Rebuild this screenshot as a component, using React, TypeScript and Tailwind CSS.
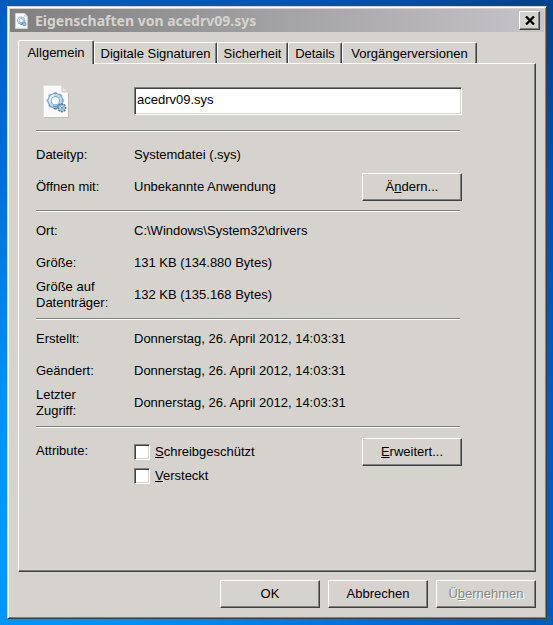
import type { ReactNode } from "react";
import clsx from "clsx";

const tabs = [
  { label: "Allgemein", width: "w-19" },
  { label: "Digitale Signaturen", width: "w-[123px]" },
  { label: "Sicherheit", width: "w-[71px]" },
  { label: "Details", width: "w-[54px]" },
  { label: "Vorgängerversionen", width: "w-[135px]" },
];

const GEAR_TEETH = [0, 45, 90, 135, 180, 225, 270, 315];

const FileIcon = ({ className }: { className: string }) => (
  <svg viewBox="0 0 26 33" className={className} aria-hidden="true">
    <path d="M0.5 0.5H19L25.5 7V32.5H0.5Z" fill="#fbfafa" stroke="#e2dedd" />
    <path d="M19 0.5V7H25.5Z" fill="#e4e2e2" stroke="#c4c0c0" strokeWidth="0.8" />
    <path d="M1 32.5H25.5V8" fill="none" stroke="#b9b4b0" strokeWidth="0.8" />
    <g transform="translate(12.3 15.7)">
      {GEAR_TEETH.map((angle) => (
        <rect
          key={angle}
          x="-1.7"
          y="-8.8"
          width="3.4"
          height="3.4"
          rx="0.8"
          fill={angle > 90 && angle < 225 ? "#54718f" : "#a3bace"}
          transform={`rotate(${angle})`}
        />
      ))}
      <circle r="5.7" fill="none" stroke="#6f93b0" strokeWidth="4" />
      <circle r="5.7" fill="none" stroke="#b4d8ee" strokeWidth="2.6" />
      <path d="M-5.4 1.6A5.7 5.7 0 0 1 -1 -5.6" fill="none" stroke="#e9f6fc" strokeWidth="1.8" />
      <path d="M-2.4 5.2A5.7 5.7 0 0 0 4.8 3" fill="none" stroke="#5fa3da" strokeWidth="1.6" />
    </g>
    <g transform="translate(18.9 22.8)">
      {GEAR_TEETH.map((angle) => (
        <rect
          key={angle}
          x="-0.9"
          y="-4.6"
          width="1.8"
          height="2"
          fill="#54708a"
          transform={`rotate(${angle})`}
        />
      ))}
      <circle r="2.8" fill="#d8edf8" stroke="#4f7391" strokeWidth="1.8" />
      <circle r="2.6" fill="none" stroke="#a6cee8" strokeWidth="1.1" />
      <circle r="0.9" fill="#3f6686" />
    </g>
  </svg>
);

const DialogButton = ({
  children,
  disabled,
}: {
  children: ReactNode;
  disabled?: boolean;
}) => (
  <button
    type="button"
    disabled={disabled}
    className={clsx(
      "h-7 w-25 shrink-0 border border-t-white border-l-white border-r-[#404040] border-b-[#404040] pb-px shadow-[inset_-1px_-1px_0_#808080]",
      disabled && "text-[#868482] [text-shadow:1px_1px_0_#fff]"
    )}
  >
    {children}
  </button>
);

const Separator = () => (
  <hr className="mr-0.5 h-0.5 border-t border-b border-t-[#808080] border-b-white" />
);

const Row = ({
  label,
  value,
  children,
}: {
  label: string;
  value: string;
  children?: ReactNode;
}) => (
  <div className="flex h-8 items-center">
    <dt className="w-[98px] shrink-0 pr-4">{label}</dt>
    <dd className="flex flex-1 items-center justify-between">
      {value}
      {children}
    </dd>
  </div>
);

const Attribute = ({ children }: { children: ReactNode }) => (
  <label className="flex h-6 items-center gap-[5px]">
    <input
      type="checkbox"
      className="size-4 appearance-none border border-t-[#808080] border-l-[#808080] border-r-white border-b-white bg-white shadow-[inset_1px_1px_0_#404040,inset_-1px_-1px_0_#d6d3ce]"
    />
    <span>{children}</span>
  </label>
);

export default function App() {
  return (
    <main className="flex min-h-screen flex-col bg-[radial-gradient(circle_at_0%_88%,#0098ff_0%,#0090f4_20%,#006cd6_50%,#0050ae_85%,#00428c_100%)] py-1.5 pr-1.5 pl-[7px] font-['Liberation_Sans',Arial,sans-serif] text-[13px] leading-4 text-black">
      <div className="flex flex-1 flex-col border border-t-[#d6d3ce] border-l-[#d6d3ce] border-r-[#404040] border-b-[#404040] bg-[#d6d3ce] p-0.5 shadow-[inset_1px_1px_0_#fff,inset_-1px_-1px_0_#808080]">
        <header className="flex h-[23px] items-center bg-linear-to-r from-[#808080] to-[#c6c4c8] pr-1 pl-[5px]">
          <FileIcon className="h-4 w-[13px]" />
          <h1 className="flex-1 pl-[7px] font-['Noto_Sans',sans-serif] text-sm leading-5 font-bold text-[#d6d3ce]">
            Eigenschaften von acedrv09.sys
          </h1>
          <button
            type="button"
            aria-label="Schließen"
            className="flex h-[19px] w-[21px] items-center justify-center border border-t-white border-l-white border-r-[#404040] border-b-[#404040] bg-[#d6d3ce] shadow-[inset_-1px_-1px_0_#808080]"
          >
            <svg viewBox="0 0 10 9" className="h-[9px] w-2.5" aria-hidden="true">
              <path d="M1 0.5L9 8.5M9 0.5L1 8.5" fill="none" stroke="#000" strokeWidth="2.3" />
            </svg>
          </button>
        </header>

        <div className="flex flex-1 flex-col px-2 pt-2 pb-2">
          <div role="tablist" className="flex items-end">
            {tabs.map((tab, i) => (
              <button
                key={tab.label}
                type="button"
                role="tab"
                aria-selected={i === 0}
                className={clsx(
                  "shrink-0 rounded-t-[2px] border-t border-r border-l border-t-white border-r-[#404040] border-l-white bg-[#d6d3ce] whitespace-nowrap shadow-[inset_-1px_0_0_#808080]",
                  tab.width,
                  i === 0 ? "relative -mb-px h-6" : "h-[21px] pt-0.5"
                )}
              >
                {tab.label}
              </button>
            ))}
          </div>

          <section
            role="tabpanel"
            className="flex-1 border border-t-white border-l-white border-r-[#404040] border-b-[#404040] pr-[73px] pl-[17px] shadow-[inset_-1px_-1px_0_#808080]"
          >
            <div className="flex h-[66px] items-center pt-2">
              <div className="w-[98px] shrink-0 pl-[7px]">
                <FileIcon className="h-[33px] w-[26px]" />
              </div>
              <input
                type="text"
                aria-label="Dateiname"
                defaultValue="acedrv09.sys"
                className="h-7 min-w-0 flex-1 border border-t-[#808080] border-l-[#808080] border-r-white border-b-white bg-white px-0.5 pb-1 shadow-[inset_1px_1px_0_#404040,inset_-1px_-1px_0_#d6d3ce] outline-none"
              />
            </div>

            <Separator />
            <dl className="py-[7px]">
              <Row label="Dateityp:" value="Systemdatei (.sys)" />
              <Row label="Öffnen mit:" value="Unbekannte Anwendung">
                <DialogButton>
                  Ä<u>n</u>dern...
                </DialogButton>
              </Row>
            </dl>

            <Separator />
            <dl className="pt-[3px] pb-[7px]">
              <Row label="Ort:" value="C:\Windows\System32\drivers" />
              <Row label="Größe:" value="131 KB (134.880 Bytes)" />
              <Row label="Größe auf Datenträger:" value="132 KB (135.168 Bytes)" />
            </dl>

            <Separator />
            <dl className="pt-[3px] pb-[7px]">
              <Row label="Erstellt:" value="Donnerstag, 26. April 2012, 14:03:31" />
              <Row label="Geändert:" value="Donnerstag, 26. April 2012, 14:03:31" />
              <Row label="Letzter Zugriff:" value="Donnerstag, 26. April 2012, 14:03:31" />
            </dl>

            <Separator />
            <div className="flex pt-2.5">
              <span className="w-[98px] shrink-0 pt-[5px]">Attribute:</span>
              <div className="flex-1 pt-0.5">
                <Attribute>
                  <u>S</u>chreibgeschützt
                </Attribute>
                <Attribute>
                  <u>V</u>ersteckt
                </Attribute>
              </div>
              <DialogButton>
                <u>E</u>rweitert...
              </DialogButton>
            </div>
          </section>

          <footer className="flex justify-end gap-2 pt-2">
            <DialogButton>OK</DialogButton>
            <DialogButton>Abbrechen</DialogButton>
            <DialogButton disabled>
              Ü<u>b</u>ernehmen
            </DialogButton>
          </footer>
        </div>
      </div>
    </main>
  );
}
